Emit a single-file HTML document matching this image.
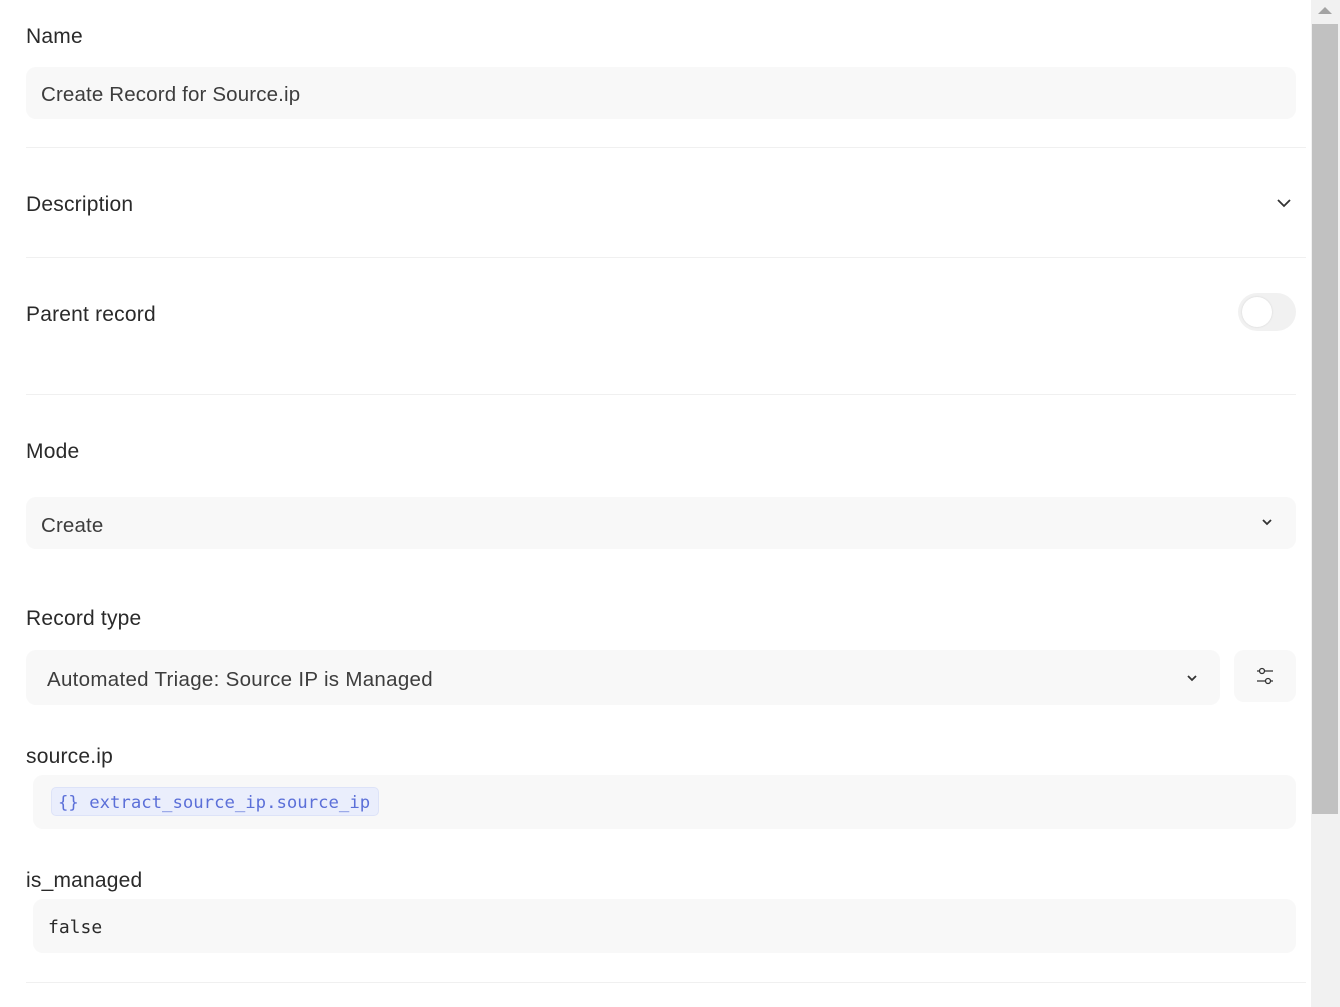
<!DOCTYPE html>
<html><head><meta charset="utf-8"><style>
*{box-sizing:border-box;margin:0;padding:0}
body{width:1340px;height:1007px;background:#fff;position:relative;overflow:hidden;font-family:"Liberation Sans",sans-serif;color:#2b2b2b}
.a{position:absolute}
.lbl{font-size:21px;color:#2a2a2a;line-height:24px;letter-spacing:0.2px}
.box{background:#f8f8f8;border-radius:10px}
.txt{font-size:20.5px;color:#3d3d3d;line-height:24px;letter-spacing:0.15px}
.hr{height:1px;background:#f0f0f0}
.mono{font-family:"DejaVu Sans Mono","Liberation Mono",monospace}
</style></head><body>
<div class="a lbl" style="left:26px;top:25px">Name</div>
<div class="a box" style="left:26px;top:67px;width:1270px;height:52px"></div>
<div class="a txt" style="left:41px;top:83px">Create Record for Source.ip</div>
<div class="a hr" style="left:26px;top:147px;width:1280px"></div>

<div class="a lbl" style="left:26px;top:193px">Description</div>
<svg class="a" style="left:1276px;top:196px" width="16" height="14" viewBox="0 0 16 14"><path d="M2 4 L8 10 L14 4" fill="none" stroke="#333" stroke-width="1.8"/></svg>
<div class="a hr" style="left:26px;top:257px;width:1280px"></div>

<div class="a lbl" style="left:26px;top:303px">Parent record</div>
<div class="a" style="left:1238px;top:293px;width:58px;height:38px;border-radius:19px;background:#f1f1f1"></div>
<div class="a" style="left:1242px;top:297px;width:30px;height:30px;border-radius:15px;background:#fff;box-shadow:0 0 2px rgba(0,0,0,.12)"></div>
<div class="a hr" style="left:26px;top:394px;width:1270px"></div>

<div class="a lbl" style="left:26px;top:440px">Mode</div>
<div class="a box" style="left:26px;top:497px;width:1270px;height:52px"></div>
<div class="a txt" style="left:41px;top:514px">Create</div>
<svg class="a" style="left:1260px;top:516px" width="14" height="12" viewBox="0 0 14 12"><path d="M3 4 L7 8 L11 4" fill="none" stroke="#333" stroke-width="1.8"/></svg>

<div class="a lbl" style="left:26px;top:607px">Record type</div>
<div class="a box" style="left:26px;top:650px;width:1194px;height:55px"></div>
<div class="a txt" style="left:47px;top:668px;letter-spacing:0.3px">Automated Triage: Source IP is Managed</div>
<svg class="a" style="left:1185px;top:672px" width="14" height="12" viewBox="0 0 14 12"><path d="M3 4 L7 8 L11 4" fill="none" stroke="#333" stroke-width="1.8"/></svg>
<div class="a box" style="left:1234px;top:650px;width:62px;height:52px"></div>
<svg class="a" style="left:1254px;top:664px" width="22" height="24" viewBox="0 0 22 24"><g fill="none" stroke="#333" stroke-width="1.3"><path d="M3 7H5.5M10.5 7H19"/><circle cx="8" cy="7" r="2.5"/><path d="M3 17H11.5M16.5 17H19"/><circle cx="14" cy="17" r="2.5"/></g></svg>

<div class="a lbl" style="left:26px;top:745px">source.ip</div>
<div class="a box" style="left:33px;top:775px;width:1263px;height:54px"></div>
<div class="a" style="left:51px;top:787px;width:328px;height:29px;background:#eaeefc;border:1px solid #dde3f8;border-radius:5px"></div>
<div class="a mono" style="left:58px;top:792px;font-size:17.3px;color:#5b6fd8;line-height:22px">{}&nbsp;extract_source_ip.source_ip</div>

<div class="a lbl" style="left:26px;top:869px">is_managed</div>
<div class="a box" style="left:33px;top:899px;width:1263px;height:54px"></div>
<div class="a mono" style="left:48px;top:917px;font-size:18px;color:#2a2a2a;line-height:22px">false</div>
<div class="a hr" style="left:26px;top:982px;width:1280px"></div>

<div class="a" style="left:1311px;top:0;width:29px;height:1007px;background:#f1f1f1"></div>
<div class="a" style="left:1312px;top:24px;width:26px;height:790px;background:#c1c1c1"></div>
<svg class="a" style="left:1316px;top:4px" width="18" height="12" viewBox="0 0 18 12"><path d="M2 10 L9 3 L16 10Z" fill="#a3a3a3"/></svg>
</body></html>
